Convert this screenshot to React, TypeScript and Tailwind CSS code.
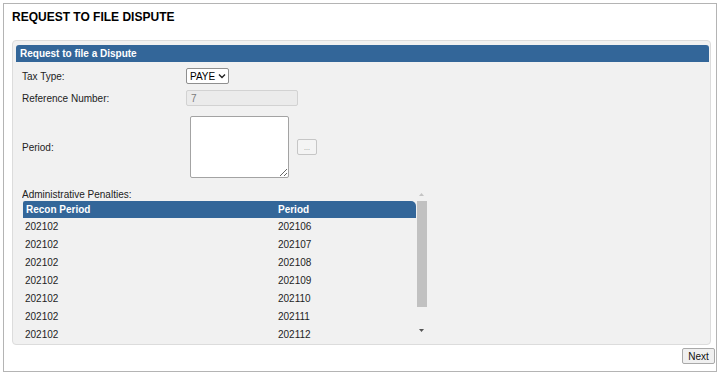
import * as React from "react";

const ROWS = [
  ["202102", "202106"],
  ["202102", "202107"],
  ["202102", "202108"],
  ["202102", "202109"],
  ["202102", "202110"],
  ["202102", "202111"],
  ["202102", "202112"],
];

export default function App() {
  return (
    <div className="w-[727px] h-[378px] bg-white p-[3px] text-[10px] text-[#222]" style={{ fontFamily: '"Liberation Sans", Arial, sans-serif' }}>
      <div className="w-[714px] h-[369px] border border-[#b4b4b4] flex flex-col">
        <div className="mt-[6px] ml-[8px] h-[14px] leading-[14px] text-[12px] font-bold text-black">REQUEST TO FILE DISPUTE</div>

        {/* panel */}
        <div className="mt-[16px] ml-[8px] w-[699px] h-[305px] rounded-[4px] border border-[#dcdcdc] bg-[#f1f1f1] pt-[4px] pl-[3px] pr-[1px] flex flex-col">
          <div className="h-[17px] rounded-t-[3px] bg-[#336699] pl-[4px] leading-[17px] text-white font-bold">Request to file a Dispute</div>

          <div className="pl-[6px] flex flex-col">
            <div className="mt-[6px] h-[16px] flex items-center">
              <div className="w-[164px]">Tax Type:</div>
              <div className="h-[16px] w-[43px] bg-white border border-[#8f8f8f] rounded-[2px] flex items-center pl-[3px] gap-[3px] text-black">
                <span>PAYE</span>
                <svg width="8" height="6" viewBox="0 0 8 6"><polyline points="1,1.5 4,4.5 7,1.5" fill="none" stroke="#222" strokeWidth="1.4" /></svg>
              </div>
            </div>

            <div className="mt-[6px] h-[16px] flex items-center">
              <div className="w-[164px]">Reference Number:</div>
              <div className="h-[16px] w-[112px] bg-[#ebebeb] border border-[#d2d2d2] rounded-[2px] flex items-center pl-[4px] text-[#7a7a7a]">7</div>
            </div>

            <div className="mt-[10px] h-[62px] flex items-center">
              <div className="w-[168px]">Period:</div>
              <textarea readOnly className="w-[99px] h-[62px] bg-white border border-[#a3a3a3] rounded-[2px] resize outline-none" />
              <div className="ml-[8px] w-[20px] h-[16px] border border-[#c6c6c6] rounded-[2px] bg-[#f4f4f4] flex items-center justify-center text-[7px] text-[#888] leading-none">...</div>
            </div>

            {/* penalties list */}
            <div className="mt-[10px] h-[155px] overflow-hidden flex">
              <div className="w-[394px] flex flex-col">
                <div className="h-[13px] leading-[13px]">Administrative Penalties:</div>
                <div className="ml-[1px] h-[17px] rounded-tl-[2px] rounded-tr-[5px] bg-[#336699] flex items-center text-white font-bold">
                  <div className="w-[255px] pl-[3px]">Recon Period</div>
                  <div>Period</div>
                </div>
                {ROWS.map((r, i) => (
                  <div key={i} className="ml-[1px] h-[18px] flex items-center text-[#1e1e1e]">
                    <div className="w-[255px] pl-[2px]">{r[0]}</div>
                    <div>{r[1]}</div>
                  </div>
                ))}
              </div>
              <div className="w-[11px] flex flex-col items-center">
                <div className="h-[13px] flex items-center justify-center">
                  <svg width="5" height="3" viewBox="0 0 5 3"><polygon points="0,3 2.5,0 5,3" fill="#c4c4c4" /></svg>
                </div>
                <div className="w-[10px] h-[106px] ml-[1px] bg-[#c1c1c1]" />
                <div className="mt-[20px] h-[6px] flex items-center justify-center">
                  <svg width="5" height="3" viewBox="0 0 5 3"><polygon points="0,0 5,0 2.5,3" fill="#555" /></svg>
                </div>
              </div>
            </div>
          </div>
        </div>

        <div className="mt-[3px] pr-[1px] flex justify-end">
          <div className="h-[16px] w-[33px] border border-[#a9a9a9] rounded-[2px] bg-[#f0f0f0] flex items-center justify-center text-[10px] text-[#111]">Next</div>
        </div>
      </div>
    </div>
  );
}
